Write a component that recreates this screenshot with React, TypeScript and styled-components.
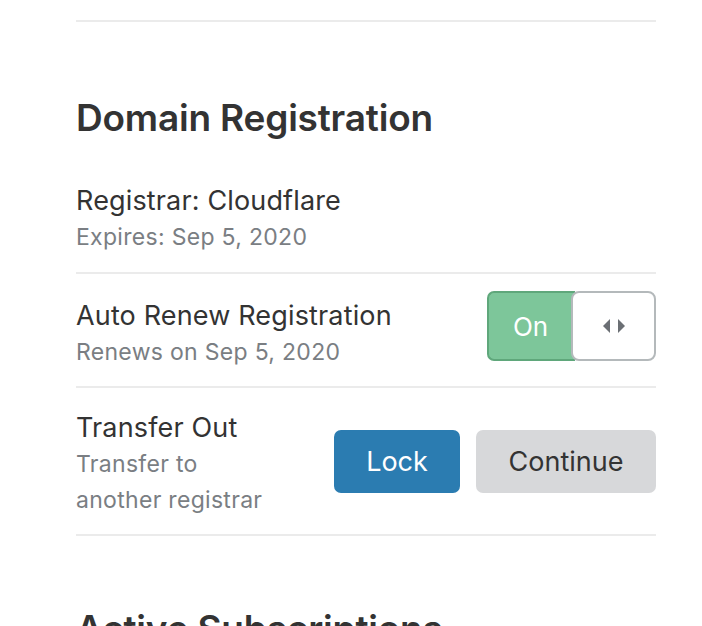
import React from "react";
import styled, { createGlobalStyle } from "styled-components";

const Global = createGlobalStyle`
  html, body { margin: 0; padding: 0; background: #fff; }
  body { font-family: Inter, "Noto Sans", sans-serif; color: #333; overflow: hidden; }
`;

const Page = styled.div`
  width: 580px;
  margin-left: 76px;
  padding-top: 20px;
`;

const Divider = styled.div`
  height: 2px;
  background: #ebebeb;
`;

const Title = styled.h2<{ $top: number }>`
  margin: ${(p) => p.$top}px 0 0;
  font-size: 37px;
  line-height: 46px;
  font-weight: 600;
  color: #333;
  letter-spacing: -0.2px;
  white-space: nowrap;
`;

const Row = styled.div<{ $pt: number; $pb: number; $top?: boolean }>`
  display: flex;
  align-items: ${(p) => (p.$top ? "flex-start" : "center")};
  justify-content: space-between;
  padding: ${(p) => p.$pt}px 0 ${(p) => p.$pb}px;
`;

const Info = styled.div<{ $w?: number; $offset?: number }>`
  display: flex;
  flex-direction: column;
  ${(p) => (p.$w ? `width: ${p.$w}px;` : "")}
  ${(p) => (p.$offset ? `padding-top: ${p.$offset}px;` : "")}
`;

const Main = styled.div`
  font-size: 27px;
  line-height: 37px;
  letter-spacing: 0.15px;
  color: #333;
`;

const Sub = styled.div`
  font-size: 23px;
  line-height: 36px;
  letter-spacing: 0.3px;
  color: #7a7e83;
`;

const Toggle = styled.div`
  display: flex;
  height: 70px;
  width: 169px;
`;

const OnPart = styled.div`
  width: 88px;
  box-sizing: border-box;
  padding-right: 3px;
  background: #7dc69a;
  border: 2px solid #5fa77b;
  border-right: none;
  border-radius: 7px 0 0 7px;
  color: #fff;
  font-size: 26px;
  display: flex;
  align-items: center;
  justify-content: center;
`;

const Knob = styled.div`
  width: 85px;
  margin-left: -4px;
  box-sizing: border-box;
  background: #fff;
  border: 2px solid #b4b9bb;
  border-radius: 8px;
  display: flex;
  align-items: center;
  justify-content: center;
`;

const Buttons = styled.div`
  display: flex;
  gap: 16px;
  margin-top: -4px;
`;

const Button = styled.button<{ $primary?: boolean; $w: number }>`
  width: ${(p) => p.$w}px;
  height: 63px;
  border: none;
  border-radius: 7px;
  font-family: inherit;
  font-size: 27px;
  background: ${(p) => (p.$primary ? "#2b7cb1" : "#d7d8da")};
  color: ${(p) => (p.$primary ? "#fff" : "#333")};
  padding: 0;
`;

const Arrows = () => (
  <svg width="24" height="16" viewBox="0 0 24 16">
    <polygon points="8,1 8,15 1,8" fill="#6b6f74" />
    <polygon points="16,1 16,15 23,8" fill="#6b6f74" />
  </svg>
);

export default function App() {
  return (
    <>
      <Global />
      <Page>
        <Divider />
        <Title $top={73}>Domain Registration</Title>
        <Row $pt={41} $pb={17}>
          <Info>
            <Main>Registrar: Cloudflare</Main>
            <Sub>Expires: Sep 5, 2020</Sub>
          </Info>
        </Row>
        <Divider />
        <Row $pt={17} $pb={16} $top>
          <Info $offset={6}>
            <Main>Auto Renew Registration</Main>
            <Sub>Renews on Sep 5, 2020</Sub>
          </Info>
          <Toggle>
            <OnPart>On</OnPart>
            <Knob>
              <Arrows />
            </Knob>
          </Toggle>
        </Row>
        <Divider />
        <Row $pt={21} $pb={16}>
          <Info $w={200}>
            <Main>Transfer Out</Main>
            <Sub>Transfer to another registrar</Sub>
          </Info>
          <Buttons>
            <Button $primary $w={126}>Lock</Button>
            <Button $w={180}>Continue</Button>
          </Buttons>
        </Row>
        <Divider />
        <Title $top={70}>Active Subscriptions</Title>
      </Page>
    </>
  );
}
